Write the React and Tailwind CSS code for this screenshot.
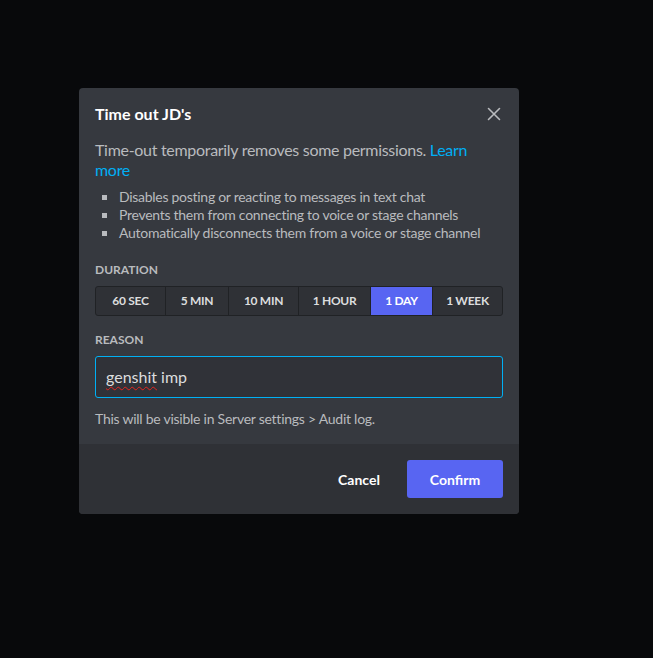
import React from 'react'

const durations = ['60 SEC', '5 MIN', '10 MIN', '1 HOUR', '1 DAY', '1 WEEK']
const widths = ['w-[69px]', 'w-[63px]', 'w-[70px]', 'w-[72px]', 'w-[62px]', 'flex-1']

const bullets = [
  'Disables posting or reacting to messages in text chat',
  'Prevents them from connecting to voice or stage channels',
  'Automatically disconnects them from a voice or stage channel',
]

const App = () => {
  const [selected, setSelected] = React.useState('1 DAY')

  return (
    <div className="min-h-[658px] w-full bg-[#08090b] pt-[88px] pl-[79px]" style={{fontFamily: 'Lato, "Noto Sans", sans-serif'}}>
      <div className="w-[440px] rounded-[4px] bg-[#36393f] overflow-hidden">
        <div className="px-4 pt-4 pb-4">
          <div className="flex items-center justify-between h-5">
            <h1 className="text-white font-bold text-[16px] leading-5">Time out JD's</h1>
            <button className="text-[#b9bbbe] -mr-[3px]">
              <svg width="24" height="24" viewBox="0 0 24 24">
                <path d="M6.5 6.5L17.5 17.5M17.5 6.5L6.5 17.5" stroke="currentColor" strokeWidth="1.6" strokeLinecap="round" fill="none" />
              </svg>
            </button>
          </div>
          <p className="mt-4 text-[16px] leading-5 text-[#b9bbbe] tracking-[-0.3px]">
            Time-out temporarily removes some permissions. <span className="text-[#00aff4]">Learn more</span>
          </p>
          <ul className="mt-2">
            {bullets.map((b, i) => (
              <li key={i} className="flex items-center text-[14px] leading-[18px] text-[#b9bbbe] tracking-[-0.28px]">
                <span className="ml-[7px] w-[5px] h-[5px] bg-[#b9bbbe]"></span>
                <span className="ml-[12px]">{b}</span>
              </li>
            ))}
          </ul>
          <div className="mt-5 text-[12px] leading-4 font-bold text-[#b9bbbe] uppercase">Duration</div>
          <div className="mt-2 flex h-[30px] rounded-[3px] border border-[#202225] bg-[#2f3136] overflow-hidden">
            {durations.map((d, i) => (
              <button
                key={d}
                onClick={() => setSelected(d)}
                className={`${widths[i]} h-full text-[12px] font-bold tracking-[-0.3px] flex items-center justify-center ${i > 0 ? 'border-l border-[#202225]' : ''} ${selected === d ? 'bg-[#5865f2] text-white' : 'text-[#dcddde]'}`}
              >
                {d}
              </button>
            ))}
          </div>
          <div className="mt-4 text-[12px] leading-4 font-bold text-[#b9bbbe] uppercase">Reason</div>
          <div className="mt-2 w-full h-[42px] rounded-[3px] border border-[#00b0f4] bg-[#303238] px-[10px] flex items-center text-[16px] text-[#dcddde]">
            <span className="underline decoration-wavy decoration-[#e5251f] decoration-1 underline-offset-[3px]">genshit</span>
            <span>&nbsp;imp</span>
          </div>
          <p className="mt-3 text-[14px] leading-[18px] text-[#b9bbbe] tracking-[-0.25px]">This will be visible in Server settings &gt; Audit log.</p>
        </div>
        <div className="bg-[#2f3136] p-4 flex justify-end">
          <button className="w-[96px] h-[38px] text-white text-[14px] font-bold">Cancel</button>
          <button className="w-[96px] h-[38px] rounded-[3px] bg-[#5865f2] text-white text-[14px] font-bold">Confirm</button>
        </div>
      </div>
    </div>
  )
}

export default App
